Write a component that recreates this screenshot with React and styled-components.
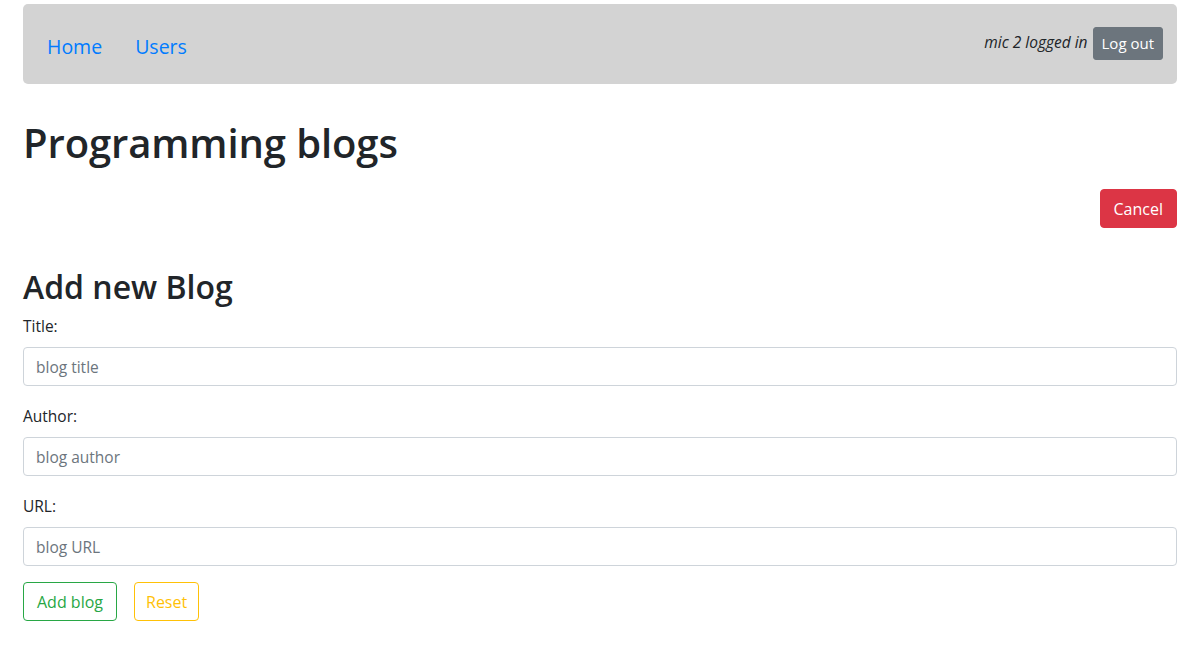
import React, { useState } from "react";
import styled, { createGlobalStyle } from "styled-components";

const GlobalStyle = createGlobalStyle`
  html, body {
    margin: 0;
    padding: 0;
    background: #fff;
  }
  body {
    font-family: "Open Sans", "Noto Sans", sans-serif;
    color: #212529;
    font-size: 16px;
  }
  * { box-sizing: border-box; }
`;

const Page = styled.div`
  padding: 4px 23px 24px;
`;

const NavBar = styled.nav`
  height: 80px;
  background: #d3d3d3;
  border-radius: 5px;
  display: flex;
  align-items: center;
  justify-content: space-between;
  padding: 0 14px 0 24px;
`;

const NavLinks = styled.div`
  display: flex;
  align-items: center;
  gap: 33px;
  margin-top: 4px;
`;

const NavLink = styled.a`
  color: #007bff;
  font-size: 19.5px;
  text-decoration: none;
  cursor: pointer;
`;

const UserBox = styled.div`
  display: flex;
  align-items: center;
  gap: 5px;
  margin-top: -1px;
`;

const LoggedIn = styled.em`
  font-size: 15.5px;
  margin-top: -3px;
`;

const Button = styled.button`
  font-family: inherit;
  font-size: ${(p) => (p.small ? "15px" : "16px")};
  height: ${(p) => (p.small ? "33px" : "39px")};
  padding: 0 ${(p) => (p.small ? "8px" : "13px")};
  border-radius: ${(p) => (p.small ? "3px" : "4px")};
  border: 1px solid ${(p) => p.color};
  background: ${(p) => (p.outline ? "#fff" : p.color)};
  color: ${(p) => (p.outline ? p.color : "#fff")};
  cursor: pointer;
  line-height: 1;
`;

const Title = styled.h1`
  font-size: 40px;
  font-weight: 600;
  line-height: 48px;
  margin: 35px 0 22px;
  letter-spacing: -0.1px;
`;

const ToggleRow = styled.div`
  display: flex;
  justify-content: flex-end;
`;

const SubTitle = styled.h2`
  font-size: 32px;
  font-weight: 600;
  line-height: 38px;
  margin: 40px 0 8px;
`;

const Field = styled.div`
  margin-bottom: 18px;
`;

const Label = styled.label`
  display: block;
  font-size: 15.5px;
  line-height: 24px;
  margin-bottom: 9px;
`;

const Input = styled.input`
  display: block;
  width: 100%;
  height: 39px;
  padding: 0 12px;
  font-family: inherit;
  font-size: 15.5px;
  color: #495057;
  border: 1px solid #ced4da;
  border-radius: 4px;
  outline: none;

  &::placeholder {
    color: #6c757d;
  }
`;

const Actions = styled.div`
  display: flex;
  gap: 17px;
  margin-top: -2px;

  & > button:last-child {
    padding: 0 11px;
  }
`;

const fields = [
  { label: "Title:", placeholder: "blog title" },
  { label: "Author:", placeholder: "blog author" },
  { label: "URL:", placeholder: "blog URL" },
];

const App = () => {
  const [values, setValues] = useState({});

  return (
    <Page>
      <GlobalStyle />
      <NavBar>
        <NavLinks>
          <NavLink>Home</NavLink>
          <NavLink>Users</NavLink>
        </NavLinks>
        <UserBox>
          <LoggedIn>mic 2 logged in</LoggedIn>
          <Button small color="#6c757d">Log out</Button>
        </UserBox>
      </NavBar>

      <Title>Programming blogs</Title>

      <ToggleRow>
        <Button color="#dc3545">Cancel</Button>
      </ToggleRow>

      <SubTitle>Add new Blog</SubTitle>
      <form onSubmit={(e) => e.preventDefault()}>
        {fields.map((f) => (
          <Field key={f.label}>
            <Label>{f.label}</Label>
            <Input
              placeholder={f.placeholder}
              value={values[f.label] || ""}
              onChange={(e) => setValues({ ...values, [f.label]: e.target.value })}
            />
          </Field>
        ))}
        <Actions>
          <Button outline color="#28a745" type="submit">Add blog</Button>
          <Button outline color="#ffc107" type="button" onClick={() => setValues({})}>
            Reset
          </Button>
        </Actions>
      </form>
    </Page>
  );
};

export default App;
